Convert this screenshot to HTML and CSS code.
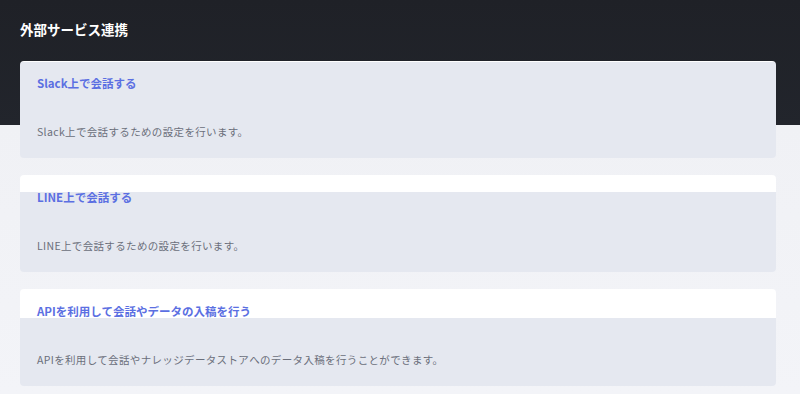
FILE: index.html
```html
<!DOCTYPE html>
<html lang="ja">
<head>
  <meta charset="UTF-8" />
  <meta name="viewport" content="width=device-width, initial-scale=1.0" />
  <title>外部サービス連携</title>
  <link rel="stylesheet" href="styles.css">
</head>
<body>
  <div class="page">
    <h2 class="page-title">外部サービス連携</h2>

    <div class="card-list">
      <!-- Slack -->
      <div class="card fill-full">
        <div class="card-title">Slack上で会話する</div>
        <p class="card-desc">Slack上で会話するための設定を行います。</p>
      </div>

      <!-- LINE -->
      <div class="card fill-mid">
        <div class="card-title">LINE上で会話する</div>
        <p class="card-desc">LINE上で会話するための設定を行います。</p>
      </div>

      <!-- API -->
      <div class="card fill-low">
        <div class="card-title">APIを利用して会話やデータの入稿を行う</div>
        <p class="card-desc">APIを利用して会話やナレッジデータストアへのデータ入稿を行うことができます。</p>
      </div>
    </div>
  </div>
</body>
</html>
```

FILE: styles.css
```css
body {
  margin: 0;
  padding: 0;
  font-family: "Noto Sans CJK JP", "Noto Sans", sans-serif;
  background-color: #f0f1f5;
}
/* Page with dark header band */
.page {
  min-height: 394px;
  box-sizing: border-box;
  padding: 19px 24px 0 20px;
  background: linear-gradient(#1f2127 0, #22252c 125px, #f0f1f5 125px, #f3f4f8 100%);
}
.page-title {
  margin: 0 0 22px;
  font-size: 13.5px;
  line-height: 20px;
  font-weight: 700;
  color: #ffffff;
}
/* Cards */
.card-list {
  display: flex;
  flex-direction: column;
  gap: 17px;
}
.card {
  height: 97px;
  box-sizing: border-box;
  padding: 14px 17px 0;
  border-radius: 4px;
  background-color: #ffffff;
}
.fill-full {
  background: linear-gradient(#ffffff 0, #ffffff 1px, #e5e8f0 1px);
}
.fill-mid {
  background: linear-gradient(#ffffff 0, #ffffff 17px, #e5e8f0 17px);
}
.fill-low {
  background: linear-gradient(#ffffff 0, #ffffff 29px, #e5e8f0 29px);
}
.card-title {
  font-size: 11.5px;
  line-height: 16px;
  font-weight: 700;
  color: #5b6fe2;
}
.card-desc {
  margin: 33px 0 0;
  font-size: 10.5px;
  line-height: 15px;
  letter-spacing: 0.35px;
  color: #6b6f7b;
}
```
